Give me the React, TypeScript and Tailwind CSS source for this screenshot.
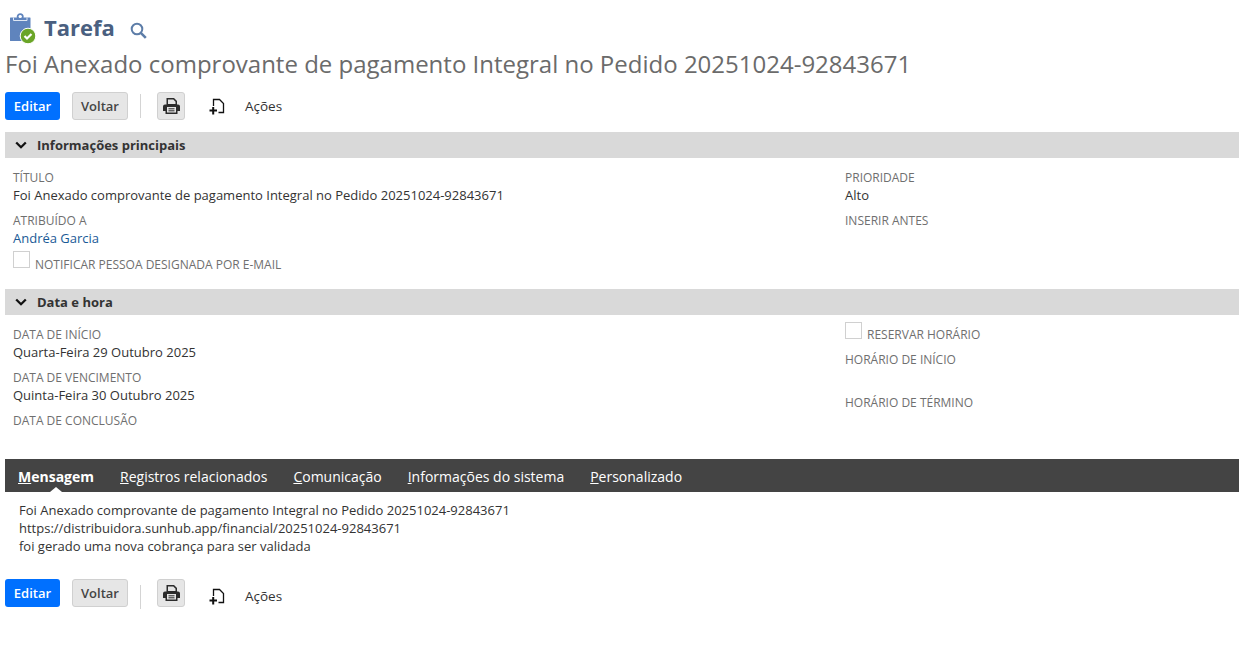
function TaskIcon() {
  return (
    <svg width="28" height="32" viewBox="0 0 28 32" className="shrink-0">
      <circle cx="11.200" cy="3.700" r="2.600" fill="#fff" stroke="#5f84bd" strokeWidth="1.800" />
      <path d="M1.500 4.500H21a.5.5 0 0 1 .5.5v22.500a.5.5 0 0 1-.5.5H1.500a.5.500 0 0 1-.5-.5V5a.5.500 0 0 1 .5-.5z" fill="#5f84bd" />
      <path d="M4.500 4.500V7.500H18V4.500" fill="none" stroke="#dfe7f3" strokeWidth="1" />
      <circle cx="11.200" cy="3.700" r="1.300" fill="#fff" />
      <circle cx="19" cy="23" r="7.800" fill="#6aa527" stroke="#fff" strokeWidth="1" />
      <path d="M15.500 23l2.500 2.500 4.500-4.500" fill="none" stroke="#fff" strokeWidth="2.200" />
    </svg>
  );
}

function SearchIcon() {
  return (
    <svg width="17" height="17" viewBox="0 0 17 17" className="shrink-0">
      <circle cx="7" cy="7" r="5.300" fill="none" stroke="#5d7da8" strokeWidth="2" />
      <path d="M10.800 10.800l5 5" fill="none" stroke="#5d7da8" strokeWidth="2.600" />
    </svg>
  );
}

function PrintIcon() {
  return (
    <svg width="17" height="18" viewBox="0 0 17 18" className="shrink-0">
      <path d="M3.500 1h7.500l3 3v4h-10.500z" fill="#2b2b2b" />
      <path d="M5 2.500h5.300l2.200 2.200V7H5z" fill="#e4e4e4" />
      <path d="M0 9.500A2 2 0 0 1 2 7.500h13a2 2 0 0 1 2 2v4.500h-2.500v3h-12v-3H0z" fill="#2b2b2b" />
      <rect x="4" y="10" width="9" height="5.500" fill="#e4e4e4" />
      <path d="M5.500 11.800h6M5.500 13.800h6" stroke="#2b2b2b" strokeWidth="1" />
    </svg>
  );
}

function NewDocIcon() {
  return (
    <svg width="16" height="17" viewBox="0 0 16 17">
      <path d="M4.500 8V1.500h6l4 4v9h-5" fill="none" stroke="#111" strokeWidth="1.300" />
      <path d="M0.500 12.500h7.500M4.200 9v7.500" fill="none" stroke="#111" strokeWidth="2" />
    </svg>
  );
}

function Toolbar({ bottom }: { bottom?: boolean }) {
  return (
    <div className="flex items-center h-7">
      <button className="h-7 w-[55px] bg-[#0070ff] rounded-[3px] text-white text-[13px] font-semibold pt-px">Editar</button>
      <button className="h-7 w-[56px] ml-3 bg-[#e6e6e6] border border-[#d0d0d0] rounded-[3px] text-[#444] text-[13px] font-semibold pt-px">Voltar</button>
      <div className={`w-px h-6 bg-[#d4d4d4] ml-3 ${bottom ? 'mt-2' : ''}`} />
      <button className="h-7 w-7 ml-4 bg-[#e6e6e6] border border-[#d0d0d0] rounded-[3px] flex items-center justify-center">
        <PrintIcon />
      </button>
      <span className={`ml-6 flex ${bottom ? 'mt-1.5' : ''}`}><NewDocIcon /></span>
      <span className={`ml-5 text-[13.5px] text-[#333] ${bottom ? 'mt-1.5' : 'mt-px'}`}>Ações</span>
    </div>
  );
}

function SectionBar({ title }: { title: string }) {
  return (
    <div className="h-[26px] bg-[#d9d9d9] flex items-center pl-[10px]">
      <svg width="12" height="8" viewBox="0 0 12 8">
        <path d="M1.200 1.500L6 6.200l4.800-4.700" fill="none" stroke="#111" strokeWidth="2.300" />
      </svg>
      <span className="ml-[10px] text-[13px] font-bold text-[#333] pt-0.5">{title}</span>
    </div>
  );
}

function Field({ label, value, link }: { label: string; value?: string; link?: boolean }) {
  return (
    <div className="h-[43px]">
      <div className="text-xs leading-[18px] text-[#6f6f6f]">{label}</div>
      {value && (
        <div className={`text-[13px] leading-[18px] -mt-px ${link ? 'text-[#1a5a96]' : 'text-[#333]'}`}>{value}</div>
      )}
    </div>
  );
}

function CheckField({ label, low }: { label: string; low?: boolean }) {
  return (
    <div className="flex items-start h-[18px]">
      <span className="w-[17px] h-[17px] border border-[#d0d0d0] bg-white shrink-0" />
      <span className={`ml-[5px] text-xs leading-[18px] text-[#6f6f6f] ${low ? 'mt-[5px]' : 'mt-1'}`}>{label}</span>
    </div>
  );
}

const tabs = [
  { first: 'M', rest: 'ensagem', active: true },
  { first: 'R', rest: 'egistros relacionados' },
  { first: 'C', rest: 'omunicação' },
  { first: 'I', rest: 'nformações do sistema' },
  { first: 'P', rest: 'ersonalizado' },
];

export default function App() {
  const font = { fontFamily: '"Open Sans", sans-serif' };
  return (
    <div className="h-[665px] bg-white pl-[5px] overflow-hidden" style={font}>
      <div className="flex items-center h-[45px] pt-[13px] pl-1">
        <TaskIcon />
        <span className="ml-[7px] text-[22px] font-bold text-[#4a6080] leading-none -mt-1">Tarefa</span>
        <span className="ml-[15px] mt-0.5 flex"><SearchIcon /></span>
      </div>
      <h1 className="text-2xl leading-[38px] text-[#6b6b6b] whitespace-nowrap">
        Foi Anexado comprovante de pagamento Integral no Pedido 20251024-92843671
      </h1>
      <div className="mt-[9px]">
        <Toolbar />
      </div>

      <div className="mt-3">
        <SectionBar title="Informações principais" />
        <div className="flex h-[131px] pl-2 pt-[11px]">
          <div className="w-[832px]">
            <Field label="TÍTULO" value="Foi Anexado comprovante de pagamento Integral no Pedido 20251024-92843671" />
            <Field label="ATRIBUÍDO A" value="Andréa Garcia" link />
            <div className="-mt-1">
              <CheckField label="NOTIFICAR PESSOA DESIGNADA POR E-MAIL" low />
            </div>
          </div>
          <div>
            <Field label="PRIORIDADE" value="Alto" />
            <Field label="INSERIR ANTES" />
          </div>
        </div>
      </div>

      <div>
        <SectionBar title="Data e hora" />
        <div className="flex h-[144px] pl-2 pt-[11px]">
          <div className="w-[832px]">
            <Field label="DATA DE INÍCIO" value="Quarta-Feira 29 Outubro 2025" />
            <Field label="DATA DE VENCIMENTO" value="Quinta-Feira 30 Outubro 2025" />
            <Field label="DATA DE CONCLUSÃO" />
          </div>
          <div className="-mt-[4px]">
            <div className="h-[29px]">
              <CheckField label="RESERVAR HORÁRIO" />
            </div>
            <Field label="HORÁRIO DE INÍCIO" />
            <Field label="HORÁRIO DE TÉRMINO" />
          </div>
        </div>
      </div>

      <div className="h-[33px] bg-[#444444] flex items-center pl-[13px] gap-[26px]">
        {tabs.map((t) => (
          <span key={t.first} className={`relative text-sm leading-[36px] h-[33px] text-white ${t.active ? 'font-bold' : ''}`}>
            <span className="underline">{t.first}</span>
            {t.rest}
            {t.active && (
              <span className="absolute left-1/2 -ml-[6px] bottom-0 w-0 h-0 border-x-[6px] border-x-transparent border-b-[5px] border-b-white" />
            )}
          </span>
        ))}
      </div>
      <div className="pl-[14px] pt-[9px] text-[13px] leading-[18px] text-[#333]">
        <div>Foi Anexado comprovante de pagamento Integral no Pedido 20251024-92843671</div>
        <div>https://distribuidora.sunhub.app/financial/20251024-92843671</div>
        <div>foi gerado uma nova cobrança para ser validada</div>
      </div>
      <div className="mt-[24px]">
        <Toolbar bottom />
      </div>
    </div>
  );
}
